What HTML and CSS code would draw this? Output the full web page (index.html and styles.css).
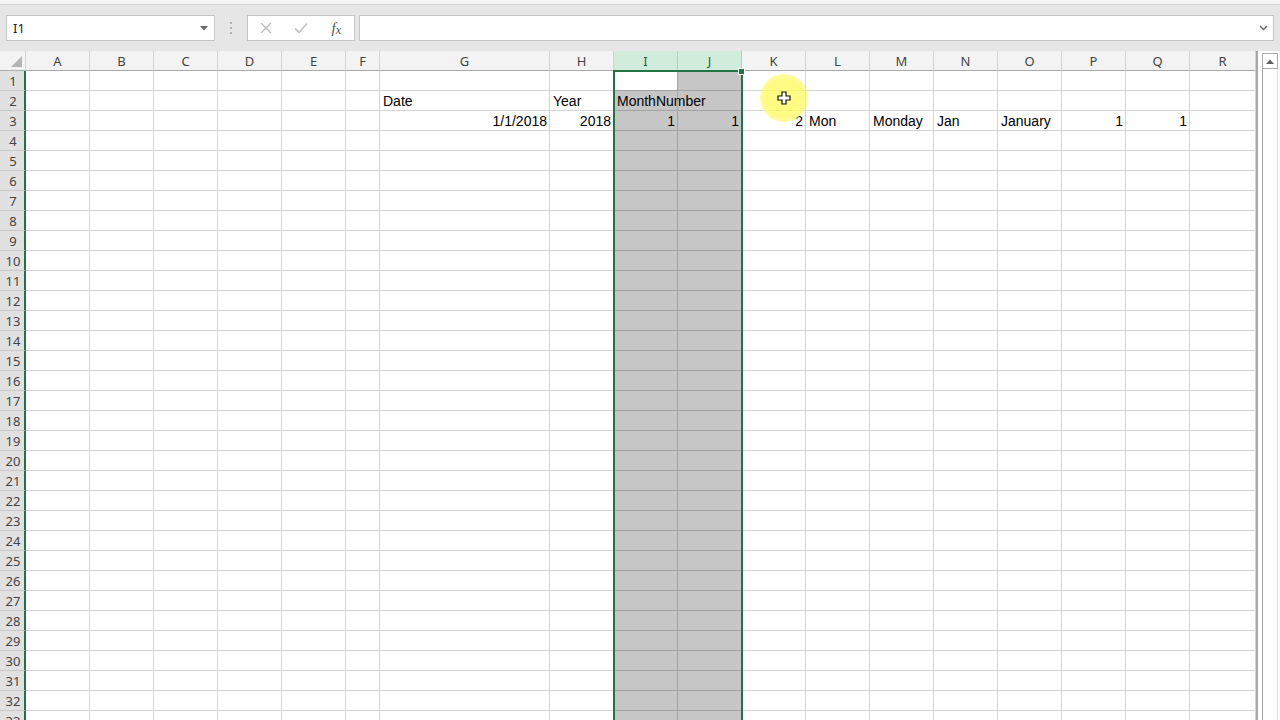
FILE: index.html
```html
<!DOCTYPE html>
<html lang="en">
<head>
    <meta charset="UTF-8">
    <title>Book1 - Excel</title>
    <link rel="stylesheet" href="styles.css">
</head>
<body>

    <div class="topstrip"></div>

    <div class="formula-bar">
        <div class="namebox">
            <span>I1</span>
            <svg class="caret" width="8" height="5" viewBox="0 0 8 5"><polygon points="0,0 8,0 4,4.5" fill="#6b6b6b"/></svg>
        </div>
        <div class="grip">
            <svg width="4" height="14" viewBox="0 0 4 14"><circle cx="2" cy="2" r="1.1" fill="#a8a8a8"/><circle cx="2" cy="7" r="1.1" fill="#a8a8a8"/><circle cx="2" cy="12" r="1.1" fill="#a8a8a8"/></svg>
        </div>
        <div class="fx-buttons">
            <span class="fx-btn">
                <svg width="12" height="12" viewBox="0 0 12 12"><path d="M1 1 L11 11 M11 1 L1 11" stroke="#b9b9b9" stroke-width="1.3" fill="none"/></svg>
            </span>
            <span class="fx-btn">
                <svg width="14" height="12" viewBox="0 0 14 12"><path d="M1 6.5 L5 10.5 L13 1.5" stroke="#c4c4c4" stroke-width="1.8" fill="none"/></svg>
            </span>
            <span class="fx-btn fx-label">f<i>x</i></span>
        </div>
        <div class="formula-input">
            <svg class="chevron" width="9" height="6" viewBox="0 0 9 6"><path d="M1 1 L4.5 4.5 L8 1" stroke="#666" stroke-width="1.4" fill="none"/></svg>
        </div>
    </div>

    <div class="sheet-area">
        <div class="sheet" id="sheet">
            <div class="selection"></div>
            <div class="fill-handle"></div>
            <div class="cursor-glow">
                <svg width="14" height="14" viewBox="0 0 14 14"><path d="M5 1 H9 V5 H13 V9 H9 V13 H5 V9 H1 V5 H5 Z" fill="#fff" stroke="#111" stroke-width="1.2"/></svg>
            </div>
        </div>
        <div class="vscroll">
            <div class="scroll-up">
                <svg width="8" height="5" viewBox="0 0 8 5"><polygon points="0,5 8,5 4,0.5" fill="#606060"/></svg>
            </div>
            <div class="scroll-thumb"></div>
        </div>
    </div>

    <script>
        // build the grid
        const sheet = document.getElementById('sheet');
        const letters = 'ABCDEFGHIJKLMNOPQR'.split('');
        const selected = ['I', 'J'];

        const data = {
            2: { G: ['Date'], H: ['Year'], I: ['MonthNumber'] },
            3: {
                G: ['1/1/2018', 'num'], H: ['2018', 'num'], I: ['1', 'num'], J: ['1', 'num'],
                K: ['2', 'num'], L: ['Mon'], M: ['Monday'], N: ['Jan'], O: ['January'],
                P: ['1', 'num'], Q: ['1', 'num']
            }
        };

        function el(cls, text) {
            const d = document.createElement('div');
            d.className = cls;
            if (text) d.textContent = text;
            sheet.appendChild(d);
            return d;
        }

        const corner = el('corner');
        corner.innerHTML = '<svg width="11" height="11" viewBox="0 0 11 11"><polygon points="11,0 11,11 0,11" fill="#b4b4b4"/></svg>';

        letters.forEach(l => {
            el('col-head' + (selected.includes(l) ? ' sel' : ''), l);
        });

        for (let r = 1; r <= 33; r++) {
            el('row-head', String(r));
            letters.forEach(l => {
                let cls = 'cell';
                if (selected.includes(l)) cls += ' shade';
                if (l === 'I' && r === 1) cls += ' active';
                const v = data[r] && data[r][l];
                if (v && v[1]) cls += ' ' + v[1];
                if (l === 'I' && r === 2) cls += ' spill';
                el(cls, v ? v[0] : '');
            });
        }
    </script>

</body>
</html>
```

FILE: styles.css
```css
* {
    box-sizing: border-box;
}

body {
    margin: 0;
    width: 1280px;
    height: 720px;
    overflow: hidden;
    background-color: #fff;
    font-family: "Liberation Sans", Arial, sans-serif;
}

.topstrip {
    height: 5px;
    background-color: #f3f3f3;
    border-bottom: 1px solid #d4d4d4;
}

/* formula bar */
.formula-bar {
    display: flex;
    align-items: center;
    height: 46px;
    padding: 0 6px;
    background-color: #e6e6e6;
}

.namebox {
    width: 209px;
    height: 26px;
    display: flex;
    align-items: center;
    justify-content: space-between;
    padding: 0 6px 0 6px;
    background-color: #fff;
    border: 1px solid #c6c6c6;
    font-family: "Noto Sans", sans-serif;
    font-size: 13px;
    color: #222;
}

.grip {
    width: 32px;
    display: flex;
    justify-content: center;
}

.fx-buttons {
    width: 108px;
    height: 26px;
    display: flex;
    background-color: #fff;
    border: 1px solid #c6c6c6;
}

.fx-btn {
    flex: 1;
    display: flex;
    align-items: center;
    justify-content: center;
}

.fx-label {
    font-family: "Liberation Serif", serif;
    font-style: italic;
    font-size: 15px;
    color: #555;
}

.fx-label i {
    font-size: 12px;
    margin-top: 4px;
}

.formula-input {
    flex: 1;
    height: 26px;
    margin-left: 4px;
    display: flex;
    align-items: center;
    justify-content: flex-end;
    padding-right: 5px;
    background-color: #fff;
    border: 1px solid #c6c6c6;
}

/* sheet */
.sheet-area {
    display: flex;
    height: 669px;
}

.sheet {
    position: relative;
    display: grid;
    grid-template-columns: 26px repeat(5, 64px) 34px 170px repeat(10, 64px) 66px;
    grid-auto-rows: 20px;
    width: 1256px;
    height: 669px;
    overflow: hidden;
}

.corner {
    display: flex;
    align-items: flex-end;
    justify-content: flex-end;
    padding: 0 3px 3px 0;
    background-color: #f3f3f3;
    border-right: 1px solid #d4d4d4;
    border-bottom: 1px solid #ababab;
}

.col-head {
    background-color: #f3f3f3;
    border-right: 1px solid #d4d4d4;
    border-bottom: 1px solid #ababab;
    text-align: center;
    font-family: "Noto Sans", sans-serif;
    font-size: 13px;
    line-height: 20px;
    color: #444;
}

.col-head.sel {
    background-color: #d2ecdc;
    border-right-color: #a9d6bc;
    border-bottom-color: #217346;
    color: #285e40;
}

.row-head {
    background-color: #e1e1e1;
    border-bottom: 1px solid #c8c8c8;
    border-right: 2px solid #217346;
    padding-left: 2px;
    text-align: center;
    font-family: "Noto Sans", sans-serif;
    font-size: 13px;
    line-height: 20px;
    color: #444;
}

.cell {
    border-right: 1px solid #d4d4d4;
    border-bottom: 1px solid #d4d4d4;
    padding: 1px 2px 0 3px;
    font-size: 14px;
    line-height: 19px;
    color: #000;
    white-space: nowrap;
}

.cell.num {
    text-align: right;
}

.cell.shade {
    background-color: #c6c6c6;
    border-color: #a2a2a2;
}

.cell.active {
    background-color: #fff;
}

.cell.spill {
    z-index: 1;
}

.selection {
    position: absolute;
    left: 613px;
    top: 19px;
    width: 130px;
    height: 700px;
    border: 2px solid #217346;
    z-index: 2;
}

.fill-handle {
    position: absolute;
    left: 738px;
    top: 17px;
    width: 7px;
    height: 7px;
    background-color: #217346;
    border: 1px solid #fff;
    z-index: 3;
}

.cursor-glow {
    position: absolute;
    left: 760px;
    top: 23px;
    width: 48px;
    height: 48px;
    border-radius: 50%;
    background: radial-gradient(circle, rgba(255, 250, 100, 0.8) 55%, rgba(255, 250, 120, 0.45) 85%, rgba(255, 255, 140, 0) 100%);
    display: flex;
    align-items: center;
    justify-content: center;
    z-index: 4;
}

/* vertical scrollbar */
.vscroll {
    flex: 1;
    position: relative;
    background-color: #fff;
    border-left: 2px solid #a8a8a8;
    padding: 2px 2px 0 4px;
}

.scroll-up {
    width: 16px;
    height: 16px;
    border: 1px solid #ababab;
    display: flex;
    align-items: center;
    justify-content: center;
}

.scroll-thumb {
    height: 660px;
    border-left: 1px solid #a8a8a8;
    border-right: 1px solid #e0e0e0;
    width: 16px;
}
```
